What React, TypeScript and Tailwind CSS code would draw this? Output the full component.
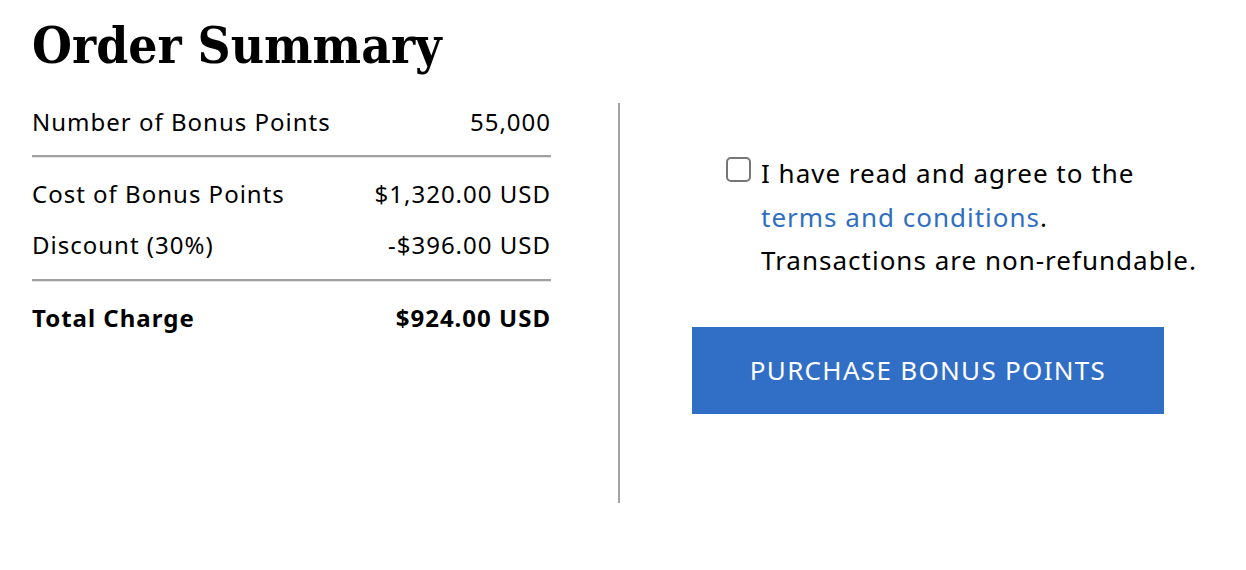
import React from 'react';

const rows = [
  { label: 'Cost of Bonus Points', value: '$1,320.00 USD' },
  { label: 'Discount (30%)', value: '-$396.00 USD' },
];

function Divider() {
  return <div className="h-[3px] border-t-2 border-[#a0a0a0] border-b-[#e6e6e6] border-b" />;
}

export default function App() {
  return (
    <div className="min-h-[570px] bg-white px-8 pt-[17px] text-black font-['Noto_Sans',sans-serif]">
      <h1 className="text-[51px] leading-[57px] font-bold font-['DejaVu_Serif_Condensed','DejaVu_Serif',serif]">
        Order Summary
      </h1>

      <div className="mt-[29px] flex">
        {/* summary table */}
        <div className="w-[519px] text-[24px] tracking-[1px]">
          <div className="flex justify-between leading-[38px]">
            <span>Number of Bonus Points</span>
            <span>55,000</span>
          </div>
          <div className="mt-[14px]">
            <Divider />
          </div>
          <div className="mt-[17px] flex flex-col gap-[13px]">
            {rows.map((r) => (
              <div key={r.label} className="flex justify-between leading-[38px]">
                <span>{r.label}</span>
                <span>{r.value}</span>
              </div>
            ))}
          </div>
          <div className="mt-[15px]">
            <Divider />
          </div>
          <div className="mt-[17px] flex justify-between leading-[38px] font-bold">
            <span>Total Charge</span>
            <span>$924.00 USD</span>
          </div>
        </div>

        <div className="ml-[67px] h-[400px] w-[2px] bg-[#a3a3a3]" />

        {/* agree + purchase */}
        <div className="pl-[72px] pt-[49px]">
          <label className="ml-[34px] flex items-start gap-[10px] text-[26px] leading-[43.5px] tracking-[1px]">
            <span className="mt-[5px] h-[25px] w-[25px] shrink-0 rounded-[5px] border-2 border-[#767676] bg-white" />
            <span>
              I have read and agree to the
              <br />
              <a className="text-[#2f6fc0]">terms and conditions</a>.
              <br />
              Transactions are non‑refundable.
            </span>
          </label>
          <button className="mt-[44px] h-[87px] w-[472px] bg-[#316fc7] text-[26px] tracking-[1.3px] text-white uppercase">
            Purchase Bonus Points
          </button>
        </div>
      </div>
    </div>
  );
}
